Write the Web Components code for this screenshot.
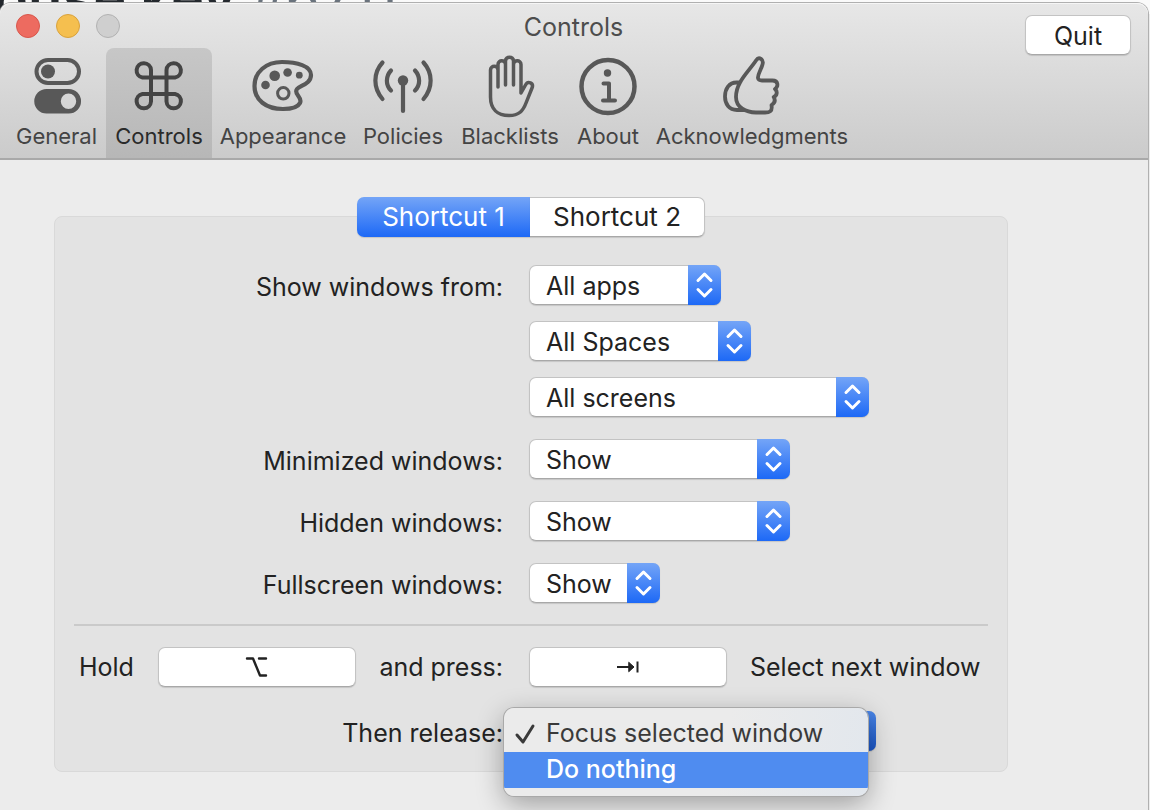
<!DOCTYPE html>
<html lang="en">
<head>
<meta charset="utf-8">
<title>Controls</title>
<style>
  html, body { margin: 0; height: 100%; }
  body {
    font-family: Inter, "Liberation Sans", sans-serif;
    font-size: 25px; line-height: 32px; color: #222;
    background: #ececec;
    display: flex; flex-direction: column;
  }
</style>
</head>
<body>
<page-behind>ouse key <span slot="number">#6711</span></page-behind>
<prefs-window>
  <title-bar slot="head" heading="Controls"></title-bar>
  <tool-bar slot="head">
    <tool-tab icon="general">General</tool-tab>
    <tool-tab icon="controls" selected>Controls</tool-tab>
    <tool-tab icon="appearance">Appearance</tool-tab>
    <tool-tab icon="policies">Policies</tool-tab>
    <tool-tab icon="blacklists">Blacklists</tool-tab>
    <tool-tab icon="about">About</tool-tab>
    <tool-tab icon="acknowledgments">Acknowledgments</tool-tab>
  </tool-bar>
  <shortcut-panel></shortcut-panel>
</prefs-window>

<script>
const define = (name, html, setup) => {
  const template = document.createElement('template');
  template.innerHTML = html;
  customElements.define(name, class extends HTMLElement {
    connectedCallback() {
      if (this.shadowRoot) return;
      this.attachShadow({ mode: 'open' }).append(template.content.cloneNode(true));
      if (setup) setup(this, this.shadowRoot);
    }
  });
};

const icons = {
  general: `<rect x="11.500" y="5" width="42.500" height="23" rx="11.500" fill="none" stroke-width="4"/><circle cx="23" cy="16.500" r="7" fill="currentColor" stroke="none"/>
    <path fill="currentColor" stroke="none" fill-rule="evenodd" d="M21.500 34h22.300a12.200 12.200 0 0 1 0 24.500H21.500A12.200 12.200 0 0 1 21.500 34zM43.500 38.500a7.700 7.700 0 1 0 0 15.400 7.700 7.700 0 0 0 0-15.400z"/>`,
  controls: `<path stroke-width="4" d="M24 21.500v19M39.500 21.500v19M24 22.500H15.500a7.200 7.200 0 1 1 8.500-7.500V46.500a7.200 7.200 0 1 1-8.500-7.500H48a7.200 7.200 0 1 1-8.500 7.500V15a7.200 7.200 0 1 1 8.500 7.500z"/>`,
  appearance: `<path stroke-width="4.200" d="M31 7C15 7 3.500 17 3.500 31S15 54 32 54c8 0 15-2 17-6 3-6-7-9-3-14 3-3.500 14-5 14-14C60 11 46 7 31 7z"/>
    <g fill="currentColor" stroke="none"><circle cx="14.500" cy="30" r="4.300"/><circle cx="23.700" cy="20.800" r="5.300"/><circle cx="36.600" cy="17.500" r="4.300"/><circle cx="48.300" cy="20.200" r="3.400"/></g><circle cx="32.300" cy="38.300" r="5.700" stroke-width="3"/>`,
  policies: `<path stroke-width="4.200" d="M11.500 7.500C2 18 2 33 11.500 44M52.500 7.500C62 18 62 33 52.500 44M20 15.500c-5.500 6-5.500 14.500 0 20M44 15.500c5.500 6 5.500 14.500 0 20M32 26v30"/><circle cx="32" cy="25.500" r="5.200" fill="currentColor" stroke="none"/>`,
  blacklists: `<path stroke-width="3.500" d="M20 32V15c0-5-7.500-5-7.500 0v27c0 12 7 18.500 18.500 18.500 10 0 14-4.500 17-12.500l6-15c2-5-4-7.500-6.500-3L43 38V9.500c0-5-7.500-5-7.500 0M20 15V9.500c0-5 7.500-5 7.500 0v20.500M27.500 10V6c0-5 8-5 8 0V30"/>`,
  about: `<circle cx="32" cy="31.500" r="26.500" stroke-width="4.500"/><circle cx="31.500" cy="18" r="3.700" fill="currentColor" stroke="none"/><path stroke-width="4" d="M27.500 28.500H33v16.500M27 45.500h12"/>`,
  acknowledgments: `<path stroke-width="3.800" d="M20 27.500C24 20 31 13 36 5.500c3-4.500 8-1 6.500 4-1.300 5-5 10-4.500 13.500.3 2 2 2.500 4 2.500h10.500c6 0 6 6 2.500 8.500 2.700 2.500 2.200 6.500-1.300 8 1.800 3 1 6-2.200 8 1.200 7-2.500 7.500-6.500 7.500H36c-10 0-20-5-20-15.500 0-5 1.500-10 4-14.500zM19 27.500h-2.500C9 27.500 5 34 5 41.500S9 55 17 55h6"/>`
};

define('page-behind', `
  <style>
    :host { display: block; height: 14px; overflow: hidden; background: #fafafa; color: #24292e; flex: none; }
    p { margin: -29px 0 0 -6px; font-size: 56px; line-height: 56px; font-weight: 600; white-space: nowrap; }
    ::slotted(span) { color: #6a737d; font-weight: 400; }
  </style>
  <p><slot></slot><slot name="number"></slot></p>`);

define('prefs-window', `
  <style>
    :host { flex: 1 0 auto; display: block; position: relative; margin: -11px 2px 0 0; background: #ececec;
      border-radius: 11px 11px 0 0; box-shadow: 0 0 0 1px #b0b0b0; }
    header { background: linear-gradient(#e7e7e7, #cbcbcb); border-radius: 11px 11px 0 0;
      border-bottom: 2px solid #a9a9a9; box-shadow: inset 0 1px #f6f6f6; }
  </style>
  <header><slot name="head"></slot></header>
  <main><slot></slot></main>`);

define('title-bar', `
  <style>
    :host { display: grid; grid-template-columns: 1fr auto 1fr; align-items: start; height: 45px; padding: 0 17px 0 16px; box-sizing: border-box; }
    .lights { display: flex; gap: 16px; padding-top: 11px; }
    .lights button { width: 24px; height: 24px; padding: 0; border: 1px solid; border-radius: 50%; box-sizing: border-box; }
    .lights .close { background: #ed6b60; border-color: #d8574c; }
    .lights .min { background: #f5bf4f; border-color: #d9a23d; }
    .lights .zoom { background: #cfcfcf; border-color: #b2b2b2; }
    h1 { margin: 8px 0 0; font-size: 25px; line-height: 32px; font-weight: 400; color: #4d4d4d; }
    .quit { justify-self: end; margin-top: 12px; width: 106px; height: 40px; padding: 2px 0 0; font: inherit; color: #222;
      background: #fff; border: 1px solid #c3c3c3; border-bottom-color: #a8a8a8; border-radius: 7px; box-shadow: 0 1px 1px #0002; }
  </style>
  <div class="lights"><button class="close" aria-label="Close"></button><button class="min" aria-label="Minimize"></button><button class="zoom" aria-label="Zoom"></button></div>
  <h1></h1>
  <button class="quit">Quit</button>`,
  (el, root) => root.querySelector('h1').textContent = el.getAttribute('heading'));

define('tool-bar', `
  <style>:host { display: grid; grid-template-columns: 99px 106px 142px 98px 116px 80px 208px; padding-left: 7px; }</style>
  <slot></slot>`);

define('tool-tab', `
  <style>
    :host { display: block; }
    button { display: flex; flex-direction: column; align-items: center; width: 100%; height: 110px; padding: 7px 0 0; border: 0;
      background: none; border-radius: 8px 8px 0 0; font: inherit; font-size: 22px; line-height: 28px; color: #444; white-space: nowrap; }
    :host([selected]) button { background: linear-gradient(#c7c7c7, #b7b7b7); color: #2a2a2a; }
    svg { width: 64px; height: 64px; margin-bottom: 3px; color: #585858; stroke: currentColor; fill: none; stroke-linecap: round; stroke-linejoin: round; }
    :host([selected]) svg { color: #444; }
  </style>
  <button><svg viewBox="0 0 64 64" aria-hidden="true"></svg><span><slot></slot></span></button>`,
  (el, root) => root.querySelector('svg').innerHTML = icons[el.getAttribute('icon')]);

define('segment-control', `
  <style>
    :host { display: grid; grid-template-columns: 173px 175px; }
    button { height: 40px; padding: 0; font: inherit; font-size: 26px; color: #222; background: #fff;
      border: 1px solid #c3c3c3; border-bottom-color: #a8a8a8; border-left: 0; border-radius: 0 7px 7px 0; box-shadow: 0 1px 1px #0002; }
    button[aria-pressed=true] { color: #fff; background: linear-gradient(#74a5f7, #1d69f6); border: 0; border-radius: 7px 0 0 7px; }
  </style>
  <button aria-pressed="true">Shortcut 1</button><button aria-pressed="false">Shortcut 2</button>`);

define('pop-up', `
  <style>
    :host { display: inline-grid; position: relative; width: var(--w); height: 40px; vertical-align: top; }
    select, .cap { grid-area: 1 / 1; }
    select { appearance: none; width: 100%; height: 40px; margin: 0; padding: 0 40px 0 16px; font: inherit; color: #222; background: #fff;
      border: 1px solid #c3c3c3; border-bottom-color: #a8a8a8; border-radius: 7px; box-shadow: 0 1px 1px #0002; }
    .cap { justify-self: end; width: 33px; height: 40px; border-radius: 0 7px 7px 0; background: linear-gradient(#74a5f7, #1d69f6); pointer-events: none; }
    :host([open]) .cap { background: linear-gradient(#4a86e8, #1a56c8); }
    svg { display: block; fill: none; stroke: #fff; stroke-width: 3; stroke-linecap: round; stroke-linejoin: round; }
  </style>
  <select></select>
  <span class="cap"><svg width="33" height="40" aria-hidden="true"><path d="M10 15.500l6.500-6.500 6.500 6.500M10 24.500l6.500 6.500 6.500-6.500"/></svg></span>
  <slot></slot>`,
  (el, root) => {
    const select = root.querySelector('select');
    select.setAttribute('aria-label', el.getAttribute('label'));
    select.add(new Option(el.getAttribute('value')));
    el.style.setProperty('--w', el.getAttribute('width') + 'px');
  });

define('pop-menu', `
  <style>
    :host { position: absolute; left: -25px; top: -3px; width: 364px; height: 88px; box-sizing: border-box; padding-top: 8px;
      background: linear-gradient(100deg, #ebebeb 60%, #e2e7ed); border-radius: 10px; overflow: hidden;
      box-shadow: 0 0 0 1px #a9a9a9, 0 8px 28px #0005; }
    div { box-sizing: border-box; display: flex; align-items: center; height: 36px; padding-bottom: 2px; color: #3a3a3a; white-space: nowrap; }
    div[aria-checked=false] { background: #4f8cf0; color: #fff; padding-left: 42px; font-weight: 500; }
    svg { width: 42px; height: 36px; fill: none; stroke: #3a3a3a; stroke-width: 3; stroke-linecap: round; stroke-linejoin: round; }
  </style>
  <div role="menuitemradio" aria-checked="true"><svg aria-hidden="true"><path d="M13 20l6 7L29 11"/></svg><span>Focus selected window</span></div>
  <div role="menuitemradio" aria-checked="false"><span>Do nothing</span></div>`,
  el => el.setAttribute('role', 'menu'));

define('key-field', `
  <style>
    :host { display: block; }
    button { display: block; width: 198px; height: 40px; padding: 0; background: #fff; border: 1px solid #c3c3c3; border-bottom-color: #a8a8a8;
      border-radius: 7px; box-shadow: 0 1px 1px #0002; }
    svg { display: block; margin: auto; fill: none; stroke: #222; stroke-width: 2; stroke-linecap: round; stroke-linejoin: round; }
  </style>
  <button><svg width="24" height="24"></svg></button>`,
  (el, root) => {
    root.querySelector('button').setAttribute('aria-label', el.getAttribute('key'));
    root.querySelector('svg').innerHTML = el.getAttribute('key') === 'Option'
      ? '<path stroke-width="2.400" d="M2 3.500h6L15 20.500h6M14 3.500h7"/>'
      : '<path d="M1 12h12M21.500 6.500v11" stroke-linecap="butt"/><path d="M13 7.500l5 4.500-5 4.500z" fill="#222" stroke-width="1"/>';
  });

define('shortcut-panel', `
  <style>
    :host { display: block; padding: 37px 140px 38px 54px; }
    section { border: 1px solid #d9d9d9; border-radius: 8px; background: #e3e3e3; margin-top: 19px; padding: 0 19px 20px; }
    segment-control { width: max-content; margin: -20px auto 28px; }
    .grid { display: grid; grid-template-columns: 429px 1fr; column-gap: 26px; row-gap: 22px; line-height: 40px; }
    .label { text-align: right; padding-top: 2px; height: 38px; white-space: nowrap; }
    .stack { display: flex; flex-direction: column; gap: 16px; }
    hr { border: 0; height: 2px; background: #cacaca; margin: 21px 0; }
    .keys { row-gap: 24px; }
    .hold { display: flex; justify-content: space-between; padding-left: 5px; }
    .next { display: flex; gap: 23px; white-space: nowrap; }
  </style>
  <section>
    <segment-control></segment-control>
    <div class="grid">
      <div class="label">Show windows from:</div>
      <div class="stack">
        <pop-up label="Apps" value="All apps" width="192"></pop-up>
        <pop-up label="Spaces" value="All Spaces" width="222"></pop-up>
        <pop-up label="Screens" value="All screens" width="340"></pop-up>
      </div>
      <div class="label">Minimized windows:</div><div><pop-up label="Minimized windows" value="Show" width="261"></pop-up></div>
      <div class="label">Hidden windows:</div><div><pop-up label="Hidden windows" value="Show" width="261"></pop-up></div>
      <div class="label">Fullscreen windows:</div><div><pop-up label="Fullscreen windows" value="Show" width="131"></pop-up></div>
    </div>
    <hr>
    <div class="grid keys">
      <div class="hold"><span>Hold</span><key-field key="Option"></key-field><span>and press:</span></div>
      <div class="next"><key-field key="Tab"></key-field><span>Select next window</span></div>
      <div class="label">Then release:</div>
      <div><pop-up label="Then release" value="Focus selected window" width="347" open><pop-menu></pop-menu></pop-up></div>
    </div>
  </section>`);
</script>
</body>
</html>
